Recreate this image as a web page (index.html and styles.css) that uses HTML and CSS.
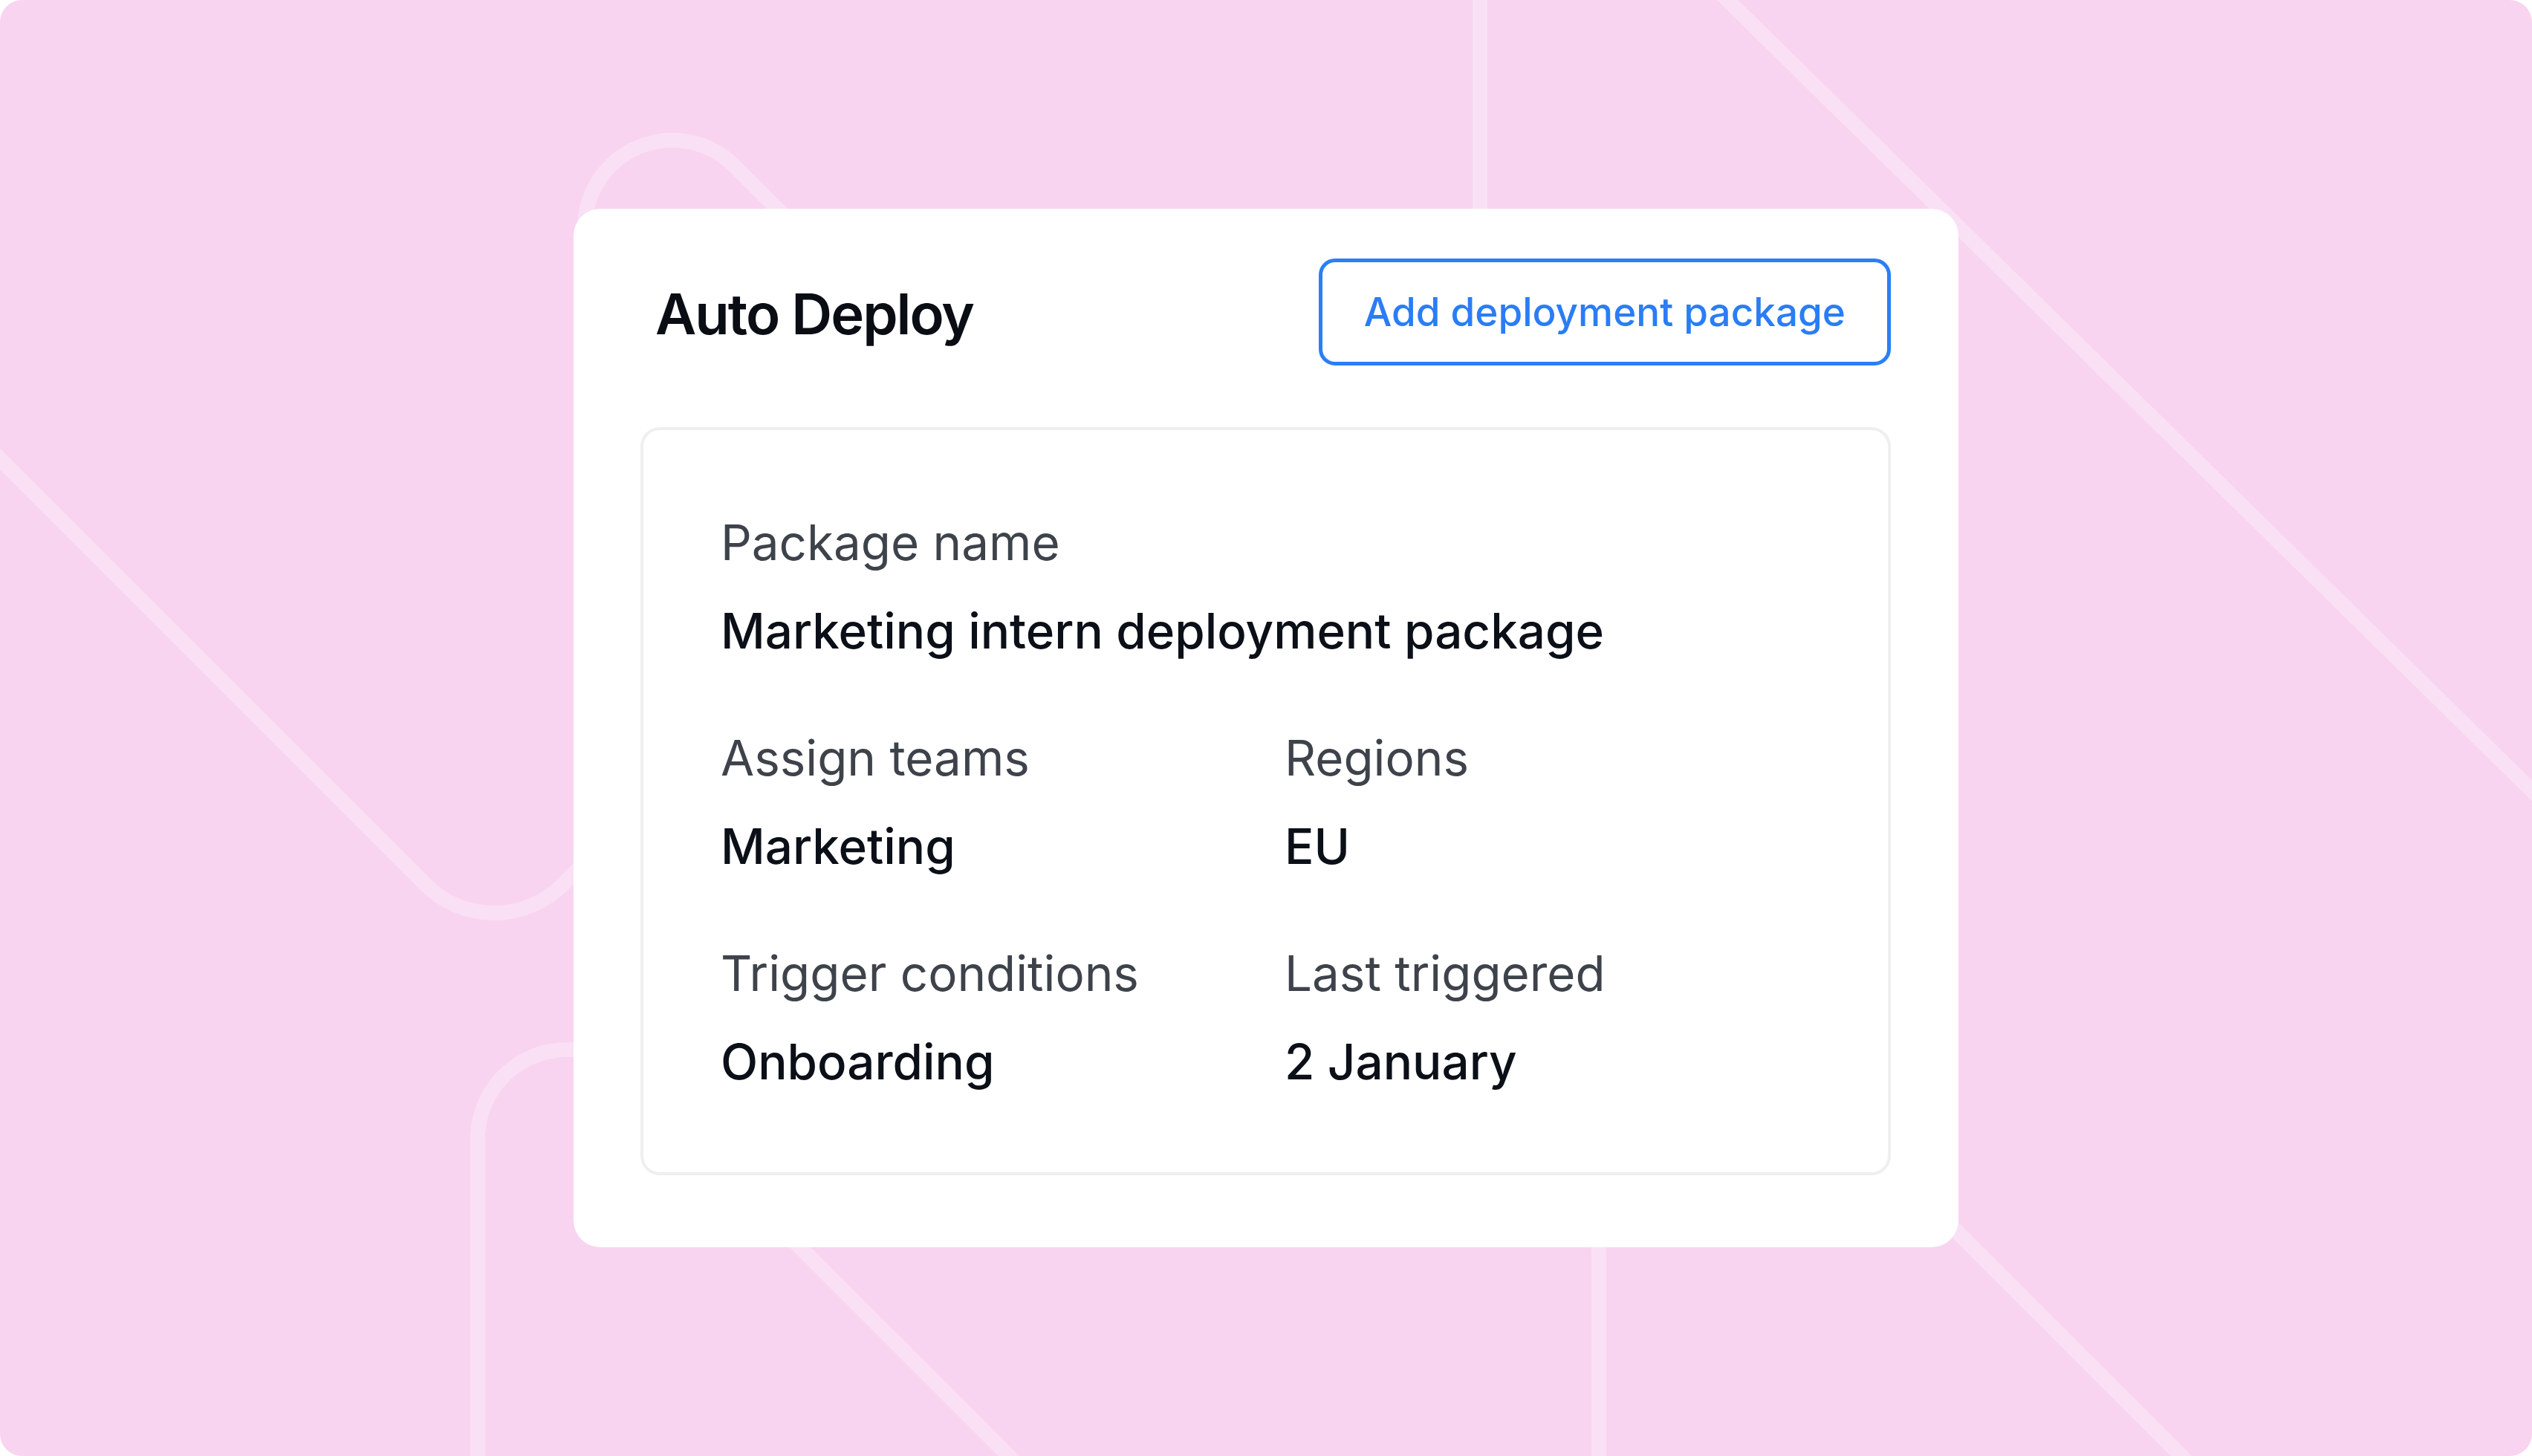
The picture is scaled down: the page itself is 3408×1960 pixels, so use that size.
FILE: index.html
```html
<!DOCTYPE html>
<html lang="en">
<head>
  <meta charset="UTF-8">
  <title>Auto Deploy</title>
  <meta name="viewport" content="width=device-width, initial-scale=1">
  <link rel="stylesheet" href="styles.css">
</head>
<body>

  <main class="frame">
    <!-- faint background strokes -->
    <svg class="backdrop" viewBox="0 0 3408 1960" width="3408" height="1960" aria-hidden="true">
      <g fill="none" stroke="#ffffff" stroke-opacity="0.28" stroke-width="20">
        <path d="M1992 -10 V 500" />
        <path d="M2315 -10 L 3490 1145" />
        <path d="M-20 598 L 573 1191 A 130 130 0 0 0 757 1191 L 950 998" />
        <path d="M787 600 L 787 307 A 118 118 0 0 1 988.5 223.5 L 1300 535" />
        <path d="M643 2000 L 643 1533 A 120 120 0 0 1 763 1413 L 1000 1413" />
        <path d="M900 1502 L 1500 2102" />
        <path d="M2152 1500 V 2000" />
        <path d="M2500 1524 L 3000 2024" />
      </g>
    </svg>

    <section class="card">
      <header class="card-head">
        <h1 class="title">Auto Deploy</h1>
        <a href="#" class="add-btn">Add deployment package</a>
      </header>

      <div class="details">
        <div class="field wide">
          <p class="label">Package name</p>
          <p class="value">Marketing intern deployment package</p>
        </div>
        <div class="field">
          <p class="label">Assign teams</p>
          <p class="value">Marketing</p>
        </div>
        <div class="field">
          <p class="label">Regions</p>
          <p class="value">EU</p>
        </div>
        <div class="field">
          <p class="label">Trigger conditions</p>
          <p class="value">Onboarding</p>
        </div>
        <div class="field">
          <p class="label">Last triggered</p>
          <p class="value">2 January</p>
        </div>
      </div>
    </section>
  </main>

</body>
</html>
```

FILE: styles.css
```css
html, body {
  margin: 0;
  background: #ffffff;
}

body {
  font-family: Inter, 'Noto Sans', 'Liberation Sans', sans-serif;
}

.frame {
  position: relative;
  width: 3408px;
  height: 1960px;
  background: #f9d4f0;
  border-radius: 30px;
  overflow: hidden;
  display: flex;
  align-items: center;
  justify-content: center;
}

.backdrop {
  position: absolute;
  left: 0;
  top: 0;
}

.card {
  position: relative; /* keeps card above the strokes */
  width: 1864px;
  box-sizing: border-box;
  padding: 67px 91px 97px 90px;
  background: #ffffff;
  border-radius: 36px;
}

.card-head {
  display: flex;
  align-items: center;
  justify-content: space-between;
  height: 144px;
  padding-left: 20px;
  margin-bottom: 83px;
}

.title {
  margin: 0;
  padding-top: 4px;
  font-size: 76px;
  line-height: 76px;
  font-weight: 600;
  color: #0a0d14;
  letter-spacing: -2px;
}

.add-btn {
  display: flex;
  align-items: center;
  box-sizing: border-box;
  height: 144px;
  padding: 0 56px;
  border: 5px solid #2a7ff6;
  border-radius: 22px;
  color: #2a7df5;
  font-size: 53px;
  font-weight: 500;
  text-decoration: none;
}

.details {
  display: grid;
  grid-template-columns: 759px 1fr;
  row-gap: 95px;
  padding: 114px 60px 110px 104px;
  border: 4px solid #efefef;
  border-radius: 26px;
}

.field.wide {
  grid-column: 1 / -1;
}

.label,
.value {
  margin: 0;
  font-size: 65.5px;
  line-height: 76px;
}

.label {
  color: #3e434b;
  font-weight: 400;
  margin-bottom: 43px;
}

.value {
  color: #0b0f17;
  font-weight: 500;
}
```
